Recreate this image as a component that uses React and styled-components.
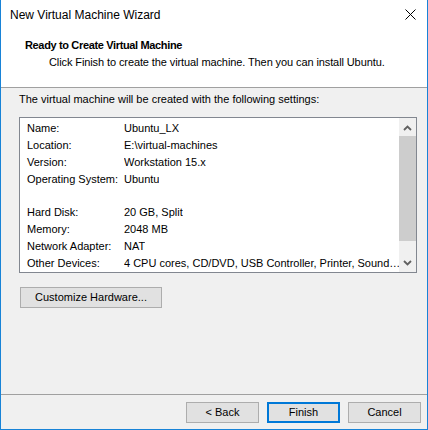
import React from 'react'
import styled, { createGlobalStyle } from 'styled-components'

const GlobalStyle = createGlobalStyle`
  html, body {
    margin: 0;
    padding: 0;
    background: #f0f0f0;
  }
  * {
    box-sizing: border-box;
  }
`

const Window = styled.div`
  width: 428px;
  height: 430px;
  display: flex;
  flex-direction: column;
  background: #f0f0f0;
  border: 1px solid #1883d7;
  border-top: none;
  font-family: 'Liberation Sans', Arial, sans-serif;
  font-size: 11px;
  color: #000;
  overflow: hidden;
`

const Header = styled.div`
  background: #fff;
  border-bottom: 1px solid #a0a0a0;
  display: flex;
  flex-direction: column;
`

const TitleBar = styled.div`
  height: 31px;
  display: flex;
  align-items: center;
  justify-content: space-between;
  padding-left: 9px;
  padding-right: 11px;
`

const Title = styled.span`
  line-height: 17px;
  font-size: 12px;
`

const CloseButton = styled.div`
  width: 12px;
  height: 12px;
  display: flex;
  align-items: center;
  justify-content: center;
  margin-top: -2px;
`

const Banner = styled.div`
  padding: 6px 0 16px 24px;
  display: flex;
  flex-direction: column;
`

const Heading = styled.div`
  font-weight: bold;
  line-height: 17px;
  letter-spacing: -0.35px;
`

const Subtitle = styled.div`
  line-height: 17px;
  padding-left: 24px;
  white-space: nowrap;
  letter-spacing: -0.1px;
`

const Body = styled.div`
  flex: 1;
  display: flex;
  flex-direction: column;
  padding: 3px 10px 0 18px;
`

const Intro = styled.div`
  line-height: 17px;
  white-space: nowrap;
`

const ListBox = styled.div`
  margin-top: 9px;
  height: 156px;
  background: #fff;
  border: 1px solid #828790;
  display: flex;
`

const Rows = styled.div`
  flex: 1;
  min-width: 0;
  padding: 2px 0 0 7px;
  display: flex;
  flex-direction: column;
`

const Row = styled.div`
  height: 17px;
  line-height: 17px;
  display: flex;
  white-space: nowrap;
`

const Label = styled.span`
  width: 97px;
  flex-shrink: 0;
`

const Value = styled.span`
  overflow: hidden;
  text-overflow: clip;
`

const Scrollbar = styled.div`
  width: 17px;
  flex-shrink: 0;
  background: #f0f0f0;
  display: flex;
  flex-direction: column;
  padding: 1px 0;
`

const ScrollArrow = styled.div`
  height: 17px;
  display: flex;
  align-items: center;
  justify-content: center;
`

const Thumb = styled.div`
  height: 105px;
  background: #cdcdcd;
`

const Track = styled.div`
  flex: 1;
`

const Button = styled.button`
  height: 21px;
  width: ${p => p.$width || 73}px;
  padding: 0;
  background: #e1e1e1;
  border: ${p => (p.$default ? '2px solid #0078d7' : '1px solid #adadad')};
  font-family: inherit;
  font-size: 11px;
  color: #000;
  line-height: 17px;
`

const CustomizeRow = styled.div`
  margin-top: 14px;
  padding-left: 1px;
`

const Footer = styled.div`
  border-top: 1px solid #a0a0a0;
  padding: 7px 6px 6px 0;
  display: flex;
  justify-content: flex-end;
  gap: 8px;
`

const settings = [
  ['Name:', 'Ubuntu_LX'],
  ['Location:', 'E:\\virtual-machines'],
  ['Version:', 'Workstation 15.x'],
  ['Operating System:', 'Ubuntu'],
  null,
  ['Hard Disk:', '20 GB, Split'],
  ['Memory:', '2048 MB'],
  ['Network Adapter:', 'NAT'],
  ['Other Devices:', '4 CPU cores, CD/DVD, USB Controller, Printer, Sound\u2026'],
]

const Chevron = ({ up }) => (
  <svg width="9" height="6" viewBox="0 0 9 6">
    <path
      d={up ? 'M1 5 L4.5 1.5 L8 5' : 'M1 1 L4.5 4.5 L8 1'}
      fill="none"
      stroke="#606060"
      strokeWidth="1.8"
    />
  </svg>
)

const App = () => {
  return (
    <>
      <GlobalStyle />
      <Window>
        <Header>
          <TitleBar>
            <Title>New Virtual Machine Wizard</Title>
            <CloseButton>
              <svg width="11" height="11" viewBox="0 0 11 11">
                <path d="M0.5 0.5 L10.5 10.5 M10.5 0.5 L0.5 10.5" stroke="#000" strokeWidth="1" />
              </svg>
            </CloseButton>
          </TitleBar>
          <Banner>
            <Heading>Ready to Create Virtual Machine</Heading>
            <Subtitle>Click Finish to create the virtual machine. Then you can install Ubuntu.</Subtitle>
          </Banner>
        </Header>
        <Body>
          <Intro>The virtual machine will be created with the following settings:</Intro>
          <ListBox>
            <Rows>
              {settings.map((s, i) =>
                s ? (
                  <Row key={i}>
                    <Label>{s[0]}</Label>
                    <Value>{s[1]}</Value>
                  </Row>
                ) : (
                  <Row key={i} />
                )
              )}
            </Rows>
            <Scrollbar>
              <ScrollArrow><Chevron up /></ScrollArrow>
              <Thumb />
              <Track />
              <ScrollArrow><Chevron /></ScrollArrow>
            </Scrollbar>
          </ListBox>
          <CustomizeRow>
            <Button $width={142}>Customize Hardware...</Button>
          </CustomizeRow>
        </Body>
        <Footer>
          <Button>&lt; Back</Button>
          <Button $default>Finish</Button>
          <Button>Cancel</Button>
        </Footer>
      </Window>
    </>
  )
}

export default App
